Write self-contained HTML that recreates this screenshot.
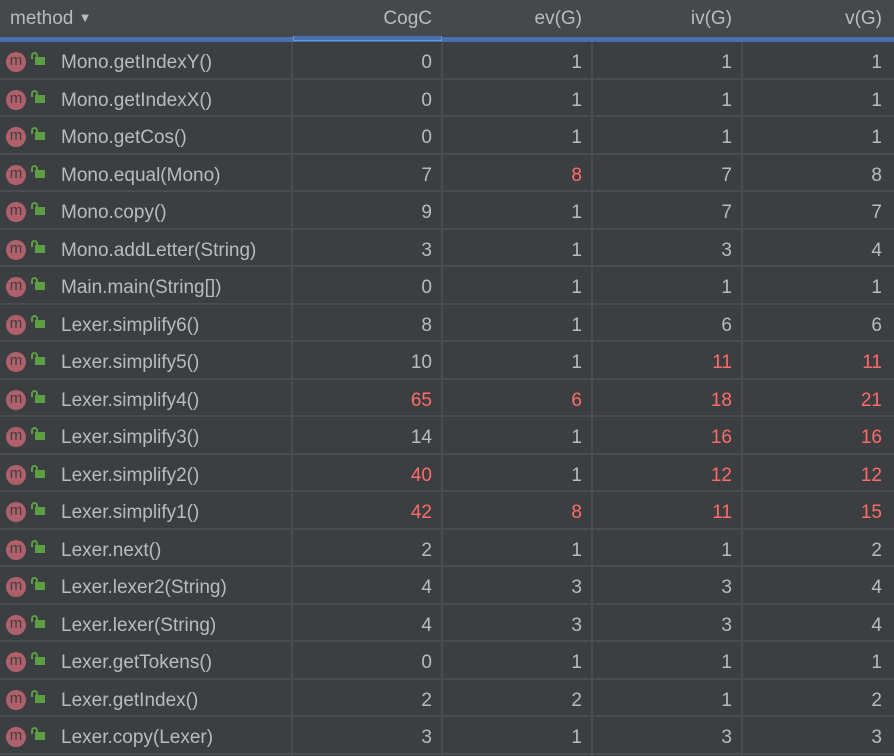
<!DOCTYPE html>
<html style="height:756px;overflow:hidden;background:#3c3f41"><head><meta charset="utf-8"><style>
body{margin:0;width:894px;height:756px;background:#3c3f41;overflow:hidden;font-family:"Liberation Sans",sans-serif;font-size:19px;color:#bbbbbb;position:relative}
.hdr{position:absolute;left:0;top:0;width:894px;height:37px;background:#45494b}
.hdr div{position:absolute;top:8px}
.blue{position:absolute;left:0;top:37px;width:894px;height:5px;background:#4b6eaf}
.sel{position:absolute;left:293px;top:36px;width:147px;height:4px;border:1px solid #5c9fe0;border-top:none;background:#4b6eaf}
.r{position:absolute;left:0;width:894px;height:37.5px;box-sizing:border-box;border-bottom:2px solid #4a4d50}
.r span{position:absolute;top:10px}
.m{left:61px}
.c1{right:462px}.c2{right:312px}.c3{right:162px}.c4{right:12px}
.red{color:#ff6b68}
.r b{position:absolute;left:6px;top:10px;width:20px;height:20px;border-radius:50%;background:#b0606a;color:#3c3f41;font-size:15px;font-weight:normal;text-align:center;line-height:18px}
.lk{position:absolute;left:35px;top:15px;width:10px;height:8px;background:#5d9e45}
.lk:before{content:"";position:absolute;left:-4px;top:-5px;width:3px;height:5px;border:2px solid #5d9e45;border-bottom:none;border-radius:4px 4px 0 0}
.v{position:absolute;top:42px;width:2px;height:714px;background:#4a4d50}
</style></head><body>
<div class="hdr"><div style="left:10px">method <span style="font-size:13px;color:#bbb;position:relative;top:-2px">▼</span></div><div style="right:462px">CogC</div><div style="right:312px">ev(G)</div><div style="right:162px">iv(G)</div><div style="right:12px">v(G)</div></div>
<div class="blue"></div><div class="sel"></div>
<div class="r" style="top:42px"><b>m</b><s class="lk"></s><span class="m">Mono.getIndexY()</span><span class="c1">0</span><span class="c2">1</span><span class="c3">1</span><span class="c4">1</span></div>
<div class="r" style="top:79.5px"><b>m</b><s class="lk"></s><span class="m">Mono.getIndexX()</span><span class="c1">0</span><span class="c2">1</span><span class="c3">1</span><span class="c4">1</span></div>
<div class="r" style="top:117px"><b>m</b><s class="lk"></s><span class="m">Mono.getCos()</span><span class="c1">0</span><span class="c2">1</span><span class="c3">1</span><span class="c4">1</span></div>
<div class="r" style="top:154.5px"><b>m</b><s class="lk"></s><span class="m">Mono.equal(Mono)</span><span class="c1">7</span><span class="c2 red">8</span><span class="c3">7</span><span class="c4">8</span></div>
<div class="r" style="top:192px"><b>m</b><s class="lk"></s><span class="m">Mono.copy()</span><span class="c1">9</span><span class="c2">1</span><span class="c3">7</span><span class="c4">7</span></div>
<div class="r" style="top:229.5px"><b>m</b><s class="lk"></s><span class="m">Mono.addLetter(String)</span><span class="c1">3</span><span class="c2">1</span><span class="c3">3</span><span class="c4">4</span></div>
<div class="r" style="top:267px"><b>m</b><s class="lk"></s><span class="m">Main.main(String[])</span><span class="c1">0</span><span class="c2">1</span><span class="c3">1</span><span class="c4">1</span></div>
<div class="r" style="top:304.5px"><b>m</b><s class="lk"></s><span class="m">Lexer.simplify6()</span><span class="c1">8</span><span class="c2">1</span><span class="c3">6</span><span class="c4">6</span></div>
<div class="r" style="top:342px"><b>m</b><s class="lk"></s><span class="m">Lexer.simplify5()</span><span class="c1">10</span><span class="c2">1</span><span class="c3 red">11</span><span class="c4 red">11</span></div>
<div class="r" style="top:379.5px"><b>m</b><s class="lk"></s><span class="m">Lexer.simplify4()</span><span class="c1 red">65</span><span class="c2 red">6</span><span class="c3 red">18</span><span class="c4 red">21</span></div>
<div class="r" style="top:417px"><b>m</b><s class="lk"></s><span class="m">Lexer.simplify3()</span><span class="c1">14</span><span class="c2">1</span><span class="c3 red">16</span><span class="c4 red">16</span></div>
<div class="r" style="top:454.5px"><b>m</b><s class="lk"></s><span class="m">Lexer.simplify2()</span><span class="c1 red">40</span><span class="c2">1</span><span class="c3 red">12</span><span class="c4 red">12</span></div>
<div class="r" style="top:492px"><b>m</b><s class="lk"></s><span class="m">Lexer.simplify1()</span><span class="c1 red">42</span><span class="c2 red">8</span><span class="c3 red">11</span><span class="c4 red">15</span></div>
<div class="r" style="top:529.5px"><b>m</b><s class="lk"></s><span class="m">Lexer.next()</span><span class="c1">2</span><span class="c2">1</span><span class="c3">1</span><span class="c4">2</span></div>
<div class="r" style="top:567px"><b>m</b><s class="lk"></s><span class="m">Lexer.lexer2(String)</span><span class="c1">4</span><span class="c2">3</span><span class="c3">3</span><span class="c4">4</span></div>
<div class="r" style="top:604.5px"><b>m</b><s class="lk"></s><span class="m">Lexer.lexer(String)</span><span class="c1">4</span><span class="c2">3</span><span class="c3">3</span><span class="c4">4</span></div>
<div class="r" style="top:642px"><b>m</b><s class="lk"></s><span class="m">Lexer.getTokens()</span><span class="c1">0</span><span class="c2">1</span><span class="c3">1</span><span class="c4">1</span></div>
<div class="r" style="top:679.5px"><b>m</b><s class="lk"></s><span class="m">Lexer.getIndex()</span><span class="c1">2</span><span class="c2">2</span><span class="c3">1</span><span class="c4">2</span></div>
<div class="r" style="top:717px"><b>m</b><s class="lk"></s><span class="m">Lexer.copy(Lexer)</span><span class="c1">3</span><span class="c2">1</span><span class="c3">3</span><span class="c4">3</span></div>
<div class="v" style="left:291px"></div><div class="v" style="left:441px"></div><div class="v" style="left:591px"></div><div class="v" style="left:741px"></div>
</body></html>
